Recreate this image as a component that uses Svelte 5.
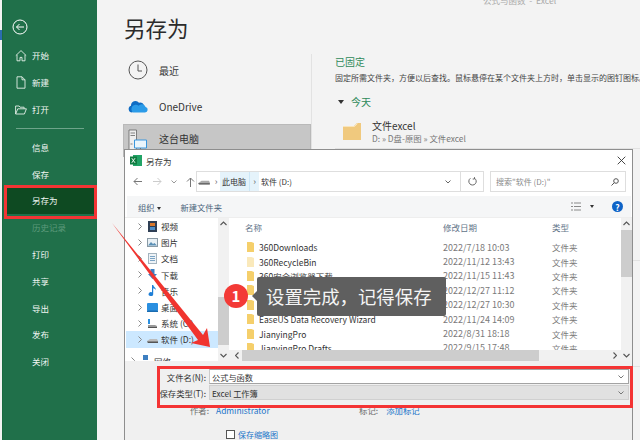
<script lang="ts">
	const navTop = [
		{ label: '开始', icon: 'home' },
		{ label: '新建', icon: 'doc' },
		{ label: '打开', icon: 'open' }
	];
	const navBottom = [
		{ label: '信息' },
		{ label: '保存' },
		{ label: '另存为', active: true },
		{ label: '历史记录', off: true },
		{ label: '打印' },
		{ label: '共享' },
		{ label: '导出' },
		{ label: '发布' },
		{ label: '关闭' }
	];
	const tree = [
		{ label: '视频', icon: 'video' },
		{ label: '图片', icon: 'pic' },
		{ label: '文档', icon: 'docs' },
		{ label: '下载', icon: 'down' },
		{ label: '音乐', icon: 'music' },
		{ label: '桌面', icon: 'desk' },
		{ label: '系统 (C:)', icon: 'sys' },
		{ label: '软件 (D:)', icon: 'drive', selected: true }
	];
	const files = [
		{ name: '360Downloads', date: '2022/7/18 10:03' },
		{ name: '360RecycleBin', date: '2022/11/12 13:43', faded: true },
		{ name: '360安全浏览器下载', date: '2022/11/15 11:43' },
		{ name: 'Apache', date: '2022/12/27 11:12' },
		{ name: 'D盘-原图', date: '2022/12/27 10:30' },
		{ name: 'EaseUS Data Recovery Wizard', date: '2022/11/24 14:09' },
		{ name: 'JianyingPro', date: '2022/8/31 18:18' },
		{ name: 'JianyingPro Drafts', date: '2022/9/15 17:48' }
	];
</script>

<div class="app">
	<div class="edge"><i></i></div>
	<aside class="side">
		<svg class="back" width="16" height="16" viewBox="0 0 16 16" fill="none" stroke="#fff" stroke-width="1">
			<circle cx="8" cy="8" r="7" />
			<path d="M12 8H4.500M7.500 5l-3 3 3 3" />
		</svg>
		<nav class="nav-top">
			{#each navTop as item}
				<div class="nav-item">
					<svg class="nav-icon" width="12" height="13" viewBox="0 0 12 13" fill="none" stroke="#e4efe8" stroke-width="0.9">
						{#if item.icon === 'home'}
							<path d="M.8 6.600 6 1.600l5.200 5M2 5.800v6h3V8.400h2v3.400h3v-6" />
						{:else if item.icon === 'doc'}
							<path d="M2 .8h5l3 3v8.400H2zM7 .8v3h3" />
						{:else}
							<path d="M.6 11V3h3.500l1 1.200h4v1.600M.6 11l2.200-5.200h8.600L9.400 11z" />
						{/if}
					</svg>
					<span>{item.label}</span>
				</div>
			{/each}
		</nav>
		<div class="nav-rule"></div>
		<nav class="nav-bottom">
			{#each navBottom as item}
				<div class="nav-item" class:active={item.active} class:off={item.off}>
					<span>{item.label}</span>
				</div>
			{/each}
		</nav>
	</aside>

	<main class="main">
		<p class="doc-title">公式与函数 &nbsp;-&nbsp; Excel</p>
		<h1>另存为</h1>
		<div class="columns">
			<div class="places">
				<div class="place">
					<svg width="20" height="20" viewBox="0 0 20 20" fill="none" stroke="#555" stroke-width="1">
						<circle cx="10" cy="10" r="9" />
						<path d="M10 4.500v6.500h4" />
					</svg>
					<span>最近</span>
				</div>
				<div class="place">
					<svg width="20" height="14" viewBox="0 0 20 14">
						<path d="M4 13.500a3.500 3.500 0 0 1-1-6.800 4.500 4.500 0 0 1 8-3 3.800 3.800 0 0 1 5 3.200z" fill="#0f6cc4" />
						<path d="M5 13.500h12a2.800 2.800 0 0 0 .6-5.500 4 4 0 0 0-7-1.300A3.400 3.400 0 0 0 5 13.500z" fill="#2b9be8" />
					</svg>
					<span>OneDrive</span>
				</div>
				<div class="place current">
					<svg width="20" height="22" viewBox="0 0 20 22" fill="none">
						<path d="M1 1h7.500v20H1z" fill="#eee" stroke="#666" stroke-width="0.8" />
						<path d="M2.500 4h4.500M2.500 6.500h4.500M2.500 15h2" stroke="#666" stroke-width="0.8" />
						<path d="M6.500 11h12v8h-12z" fill="#eaf5fc" stroke="#3a96dd" stroke-width="1" />
						<path d="M12.500 19v2M10 21.500h5" stroke="#666" stroke-width="0.8" />
					</svg>
					<span>这台电脑</span>
				</div>
			</div>
			<div class="pinned">
				<h2>已固定</h2>
				<p class="hint">固定所需文件夹，方便以后查找。鼠标悬停在某个文件夹上方时，单击显示的图钉图标。</p>
				<div class="group"><i class="caret"></i><span>今天</span></div>
				<div class="recent">
					<svg width="18" height="17" viewBox="0 0 18 17">
						<path d="M0 3h11l3-3h4v17H0z" fill="#f0c97e" />
						<path d="M0 3.500h11.500l3-3" fill="none" stroke="#fbeccb" stroke-width="0.8" />
					</svg>
					<div>
						<div class="recent-name">文件excel</div>
						<div class="recent-path">D: » D盘-原图 » 文件excel</div>
					</div>
				</div>
				<div class="rows-rule"></div>
				<div class="spare-row tall"></div>
				<div class="spare-row"></div>
			</div>
		</div>
	</main>

	<section class="dialog">
		<header class="dlg-title">
			<svg width="12" height="11" viewBox="0 0 12 11">
				<rect x="3" y="0" width="9" height="11" fill="#21a366" />
				<rect x="0" y="1.500" width="7" height="8" fill="#107c41" />
				<path d="m1.800 3.200 3.200 4.600M5 3.200 1.800 7.800" stroke="#fff" stroke-width="0.9" />
			</svg>
			<span>另存为</span>
			<svg class="close" width="9" height="9" viewBox="0 0 9 9" stroke="#333" stroke-width="0.9">
				<path d="m.7.700 7.600 7.600M8.300.700.700 8.300" />
			</svg>
		</header>

		<div class="addr-row">
			<div class="arrows">
				<svg width="10" height="9" viewBox="0 0 10 9" fill="none" stroke="#777"><path d="M9 4.500H1M4.500 1 1 4.500 4.500 8" /></svg>
				<svg width="10" height="9" viewBox="0 0 10 9" fill="none" stroke="#ccc"><path d="M1 4.500h8M5.500 1 9 4.500 5.500 8" /></svg>
				<svg width="6" height="4" viewBox="0 0 6 4" fill="none" stroke="#999"><path d="m.5.500 2.500 2.500L5.500.500" /></svg>
				<svg width="9" height="10" viewBox="0 0 9 10" fill="none" stroke="#777"><path d="M4.500 10V1M1 4.500 4.500 1 8 4.500" /></svg>
			</div>
			<div class="addr">
				<svg class="crumb-drive" width="12" height="5" viewBox="0 0 14 6"><path d="M0 4 4 1h9l1 2v2H1z" fill="#aaa" /><path d="M0 4h14v1.500H1z" fill="#555" /></svg>
				<span class="sep">›</span>
				<span class="crumb hot">此电脑</span>
				<span class="sep hot-sep">›</span>
				<span class="crumb">软件 (D:)</span>
				<svg class="addr-down" width="6" height="4" viewBox="0 0 6 4" fill="none" stroke="#666"><path d="m.5.500 2.500 2.500L5.500.500" /></svg>
				<div class="refresh">
					<svg width="9" height="9" viewBox="0 0 9 9" fill="none" stroke="#666" stroke-width="1"><path d="M6.500 1.200A3.700 3.700 0 1 1 2.400 1.300M6.500 .2v1.800H4.700" /></svg>
				</div>
			</div>
			<div class="search">
				<span>搜索"软件 (D:)"</span>
				<svg width="8" height="8" viewBox="0 0 8 8" fill="none" stroke="#555"><circle cx="5" cy="3" r="2.300" /><path d="M3.300 4.700.5 7.500" /></svg>
			</div>
		</div>

		<div class="toolbar">
			<span class="organize">组织 <i class="mini-caret"></i></span>
			<span class="newdir">新建文件夹</span>
			<span class="spacer"></span>
			<svg width="10" height="9" viewBox="0 0 10 9" stroke="#8a8a8a" stroke-width="1">
				<path d="M0 1h2M3 1h7M0 4.500h2M3 4.500h7M0 8h2M3 8h7" />
			</svg>
			<i class="mini-caret view"></i>
			<span class="help">?</span>
		</div>

		<div class="browser">
			<div class="tree">
				{#each tree as row}
					<div class="tree-row" class:selected={row.selected}>
						<svg class="chev" width="4" height="7" viewBox="0 0 4 7" fill="none" stroke="#888"><path d="m.5.500 3 3-3 3" /></svg>
						<svg class="tree-icon" width="11" height="11" viewBox="0 0 11 11">
							{#if row.icon === 'video'}
								<rect x="1" y="0" width="9" height="11" fill="#2f3f55" />
								<rect x="3" y="2" width="5" height="3" fill="#d9782d" />
								<rect x="3" y="6" width="5" height="3" fill="#4f8fc9" />
							{:else if row.icon === 'pic'}
								<rect x=".5" y="1.500" width="10" height="8" fill="#e8f0f5" stroke="#8a9aa5" />
								<path d="M1 8.500 4 5l2 2 1.500-1L10 8.500z" fill="#5a8fb5" />
							{:else if row.icon === 'docs'}
								<rect x="1.500" y=".5" width="8" height="10" fill="#eef3f7" stroke="#a4b4bf" />
								<path d="M3 3.500h5M3 5.500h5M3 7.500h5" stroke="#7aa3c4" />
							{:else if row.icon === 'down'}
								<path d="M3.500 0h4v5H10L5.500 10 1 5h2.500z" fill="#3d7fc1" />
							{:else if row.icon === 'music'}
								<path d="M5 0h1.200c.3 2 3 2.500 2.600 5C8.300 3.800 7 3.400 6.200 3.200V9A2.300 2 0 1 1 5 7.300z" fill="#1f7fd6" />
							{:else if row.icon === 'desk'}
								<rect x="0" y="1" width="11" height="8" rx="1" fill="#2a8fe0" />
								<rect x="0" y="8.500" width="11" height="1.500" fill="#1a6cb0" />
							{:else if row.icon === 'sys'}
								<path d="M1 1h2v5H1z" fill="#2a8fe0" />
								<path d="M1 7h7l2 1v2H1z" fill="#999" />
								<path d="M1 9h9v1H1z" fill="#555" />
							{:else}
								<path d="M0 7l3-2h7l1 2v2H1z" fill="#bbb" />
								<path d="M0 7.500h11V9H1z" fill="#555" />
							{/if}
						</svg>
						<span>{row.label}</span>
					</div>
				{/each}
				<div class="tree-row network">
					<svg class="chev" width="4" height="7" viewBox="0 0 4 7" fill="none" stroke="#888"><path d="m.5.500 3 3-3 3" /></svg>
					<svg class="tree-icon" width="11" height="11" viewBox="0 0 11 11"><rect x="3" y="0" width="5" height="5" fill="#3d7fc1" /><rect x="0" y="6" width="5" height="5" fill="#3d7fc1" /><rect x="6" y="6" width="5" height="5" fill="#3d7fc1" /></svg>
					<span>网络</span>
				</div>
			</div>

			<div class="vbar tree-bar">
				<svg class="bar-up" width="7" height="5" viewBox="0 0 7 5" fill="none" stroke="#555" stroke-width="1.100"><path d="m.5 4 3-3 3 3" /></svg>
				<div class="bar-track"><div class="bar-thumb tree-thumb"></div></div>
				<svg class="bar-down" width="7" height="5" viewBox="0 0 7 5" fill="none" stroke="#555" stroke-width="1.100"><path d="m.5 1 3 3 3-3" /></svg>
			</div>

			<div class="list">
				<div class="list-body">
					<div class="list-head">
						<span class="col-name">名称</span>
						<span class="col-date">修改日期</span>
						<span class="col-type">类型</span>
					</div>
					<div class="list-rows">
						{#each files as f}
							<div class="file">
								<svg class="folder" class:faded={f.faded} width="7" height="10" viewBox="0 0 7 10">
									<path d="M0 0h4.500L7 1v9H0z" fill="#f5cf6b" />
								</svg>
								<span class="col-name fname">{f.name}</span>
								<span class="col-date fmeta">{f.date}</span>
								<span class="col-type fmeta">文件夹</span>
							</div>
						{/each}
					</div>
				</div>
				<div class="hbar">
					<svg width="4" height="7" viewBox="0 0 4 7" fill="none" stroke="#555" stroke-width="1.100"><path d="M3.500.500.500 3.500l3 3" /></svg>
					<div class="hbar-track"><div class="hbar-thumb"></div></div>
					<svg width="4" height="7" viewBox="0 0 4 7" fill="none" stroke="#555" stroke-width="1.100"><path d="m.5.500 3 3-3 3" /></svg>
				</div>
			</div>

			<div class="vbar list-bar">
				<svg class="bar-up" width="7" height="5" viewBox="0 0 7 5" fill="none" stroke="#555" stroke-width="1.100"><path d="m.5 4 3-3 3 3" /></svg>
				<div class="bar-track"><div class="bar-thumb list-thumb"></div></div>
				<svg class="bar-down" width="7" height="5" viewBox="0 0 7 5" fill="none" stroke="#555" stroke-width="1.100"><path d="m.5 1 3 3 3-3" /></svg>
			</div>
		</div>

		<div class="form">
			<div class="form-row">
				<label for="fname">文件名(N):</label>
				<div class="field" id="fname">
					<span>公式与函数</span>
					<svg width="6" height="4" viewBox="0 0 6 4" fill="none" stroke="#777"><path d="m.5.500 2.500 2.500L5.500.500" /></svg>
				</div>
			</div>
			<div class="form-row">
				<label for="ftype">保存类型(T):</label>
				<div class="field select" id="ftype">
					<span>Excel 工作簿</span>
					<svg width="6" height="4" viewBox="0 0 6 4" fill="none" stroke="#777"><path d="m.5.500 2.500 2.500L5.500.500" /></svg>
				</div>
			</div>
			<div class="meta">
				<span class="meta-key">作者:</span>
				<span class="meta-link author">Administrator</span>
				<span class="meta-key tag-key">标记:</span>
				<span class="meta-link">添加标记</span>
			</div>
			<div class="thumb-opt">
				<i class="check"></i>
				<span class="meta-link">保存缩略图</span>
			</div>
		</div>
	</section>

	<!-- annotations laid over the screenshot -->
	<div class="red-box nav-mark"></div>
	<div class="red-box form-mark"></div>
	<svg class="pointer" width="102" height="128" viewBox="0 0 102 128">
		<path d="M1 1 87 118 80 121 99 125 96 106 92 113Z" fill="#f0342f" />
	</svg>
	<div class="callout">
		<span class="badge">1</span>
		<div class="bubble">设置完成，记得保存</div>
	</div>
</div>

<style>
	:global(body) {
		margin: 0;
	}

	.app {
		position: relative;
		display: flex;
		width: 640px;
		height: 440px;
		overflow: hidden;
		background: #f3f3f3;
		color: #333;
		font-family: "Noto Sans CJK SC", "Noto Sans", sans-serif;
	}

	.edge {
		flex: none;
		width: 2px;
		padding-top: 30px;
	}

	.edge i {
		display: block;
		height: 10px;
		background: #2b6cb0;
	}

	/* left green rail */
	.side {
		flex: none;
		width: 94px;
		background: #20704a;
		color: #f1f6f3;
		font-size: 8.500px;
		border-left: 1px solid #1a6a40;
	}

	.back {
		display: block;
		margin: 19px 0 0 9px;
	}

	.nav-top {
		margin-top: 7px;
	}

	.nav-item {
		display: flex;
		align-items: center;
		height: 26.800px;
		padding-left: 29px;
		position: relative;
	}

	.nav-icon {
		position: absolute;
		left: 12px;
		top: 7px;
	}

	.nav-item.active {
		background: #0e4a22;
		margin: 0 0 0 3px;
		padding-left: 26px;
	}

	.nav-item.off {
		color: #5d9a7b;
	}

	.nav-rule {
		height: 1px;
		margin: 6px 13px 4px 13px;
		background: #6ea48a;
	}

	/* backstage content */
	.main {
		flex: 1;
		min-width: 0;
		padding-left: 27px;
		position: relative;
	}

	.doc-title {
		position: absolute;
		left: 386px;
		top: -6px;
		margin: 0;
		font-size: 8.500px;
		color: #aaa;
		white-space: nowrap;
	}

	h1 {
		margin: 9px 0 0;
		font-size: 21.500px;
		font-weight: 400;
		line-height: 38px;
		color: #2b2b2b;
	}

	.columns {
		display: flex;
		margin-top: 7px;
	}

	.places {
		flex: none;
		width: 187px;
		height: 120px;
		border-right: 1px solid #e2e2e2;
		font-size: 10px;
	}

	.place {
		display: flex;
		align-items: center;
		gap: 11px;
		height: 36px;
		padding-left: 4px;
	}

	.place:first-child {
		margin-top: -2px;
	}

	.place.current {
		height: 33px;
		width: 188px;
		margin-left: -1px;
		box-sizing: border-box;
		background: #c6c6c6;
		border: 1px solid #b9b9b9;
		align-items: flex-start;
		padding-top: 4px;
	}

	.place.current span {
		margin-top: 2px;
	}

	.pinned {
		flex: 1;
		min-width: 0;
		padding-left: 23px;
		overflow: hidden;
	}

	h2 {
		margin: 0;
		font-size: 10px;
		font-weight: 400;
		line-height: 16px;
		color: #2f8a5a;
	}

	.hint {
		margin: 1px 0 0;
		font-size: 8px;
		line-height: 14px;
		white-space: nowrap;
		color: #444;
	}

	.group {
		display: flex;
		align-items: center;
		gap: 7px;
		margin-top: 8px;
		padding-left: 3px;
		font-size: 10px;
		line-height: 18px;
		color: #2f8a5a;
	}

	.caret {
		width: 0;
		height: 0;
		border: 3px solid transparent;
		border-top: 4px solid #333;
		border-bottom: 0;
	}

	.recent {
		display: flex;
		align-items: center;
		gap: 11px;
		margin-top: 8px;
		padding-left: 8px;
	}

	.recent-name {
		font-size: 10px;
		line-height: 13px;
		color: #333;
	}

	.recent-path {
		font-size: 8.400px;
		line-height: 12px;
		color: #777;
	}

	.rows-rule {
		height: 1px;
		margin-top: 4px;
		background: #e2e2e2;
	}

	.spare-row {
		height: 105px;
		border-bottom: 1px solid #e2e2e2;
	}

	.spare-row.tall {
		height: 111px;
	}

	/* save-as dialog floats above the backstage page */
	.dialog {
		position: absolute;
		left: 124px;
		top: 149px;
		width: 509px;
		height: 300px;
		box-sizing: border-box;
		display: flex;
		flex-direction: column;
		background: #fff;
		border: 1px solid #8e8e8e;
		font-size: 8.500px;
	}

	.dlg-title {
		display: flex;
		align-items: center;
		gap: 4px;
		height: 21px;
		flex: none;
		padding: 0 6px 0 5px;
		font-size: 8.500px;
	}

	.close {
		margin-left: auto;
	}

	.addr-row {
		display: flex;
		align-items: center;
		height: 21px;
		flex: none;
		padding: 0 6px 0 8px;
	}

	.arrows {
		display: flex;
		align-items: center;
		gap: 9px;
		width: 63px;
		flex: none;
	}

	.addr {
		display: flex;
		align-items: center;
		height: 21px;
		flex: 1;
		box-sizing: border-box;
		border: 1px solid #dedede;
		font-size: 8px;
		color: #333;
	}

	.crumb-drive {
		margin: 2px 2px 0 1px;
	}

	.sep {
		font-size: 9px;
		width: 8px;
		text-align: center;
		color: #666;
	}

	.crumb {
		padding: 0 3px 0 2px;
		line-height: 19px;
	}

	.crumb.hot,
	.hot-sep {
		background: #e5f3fb;
		line-height: 19px;
	}

	.hot-sep {
		width: 10px;
		box-sizing: border-box;
		border-left: 1px solid #cbe6f7;
		margin-right: 0;
	}

	.addr-down {
		margin-left: auto;
		margin-right: 9px;
	}

	.refresh {
		display: flex;
		align-items: center;
		justify-content: center;
		width: 22px;
		height: 19px;
		border-left: 1px solid #dedede;
	}

	.search {
		display: flex;
		align-items: center;
		justify-content: space-between;
		flex: none;
		width: 136px;
		height: 21px;
		box-sizing: border-box;
		margin-left: 6px;
		padding: 0 6px 0 5px;
		border: 1px solid #dedede;
		font-size: 8px;
		color: #8a8a8a;
	}

	.toolbar {
		display: flex;
		align-items: center;
		flex: none;
		height: 21px;
		margin: 4px 1px 0 2px;
		padding: 0 8px 0 11px;
		background: #f5f6f7;
		color: #49627a;
		font-size: 8.300px;
	}

	.newdir {
		margin-left: 19px;
	}

	.spacer {
		flex: 1;
	}

	.mini-caret {
		display: inline-block;
		width: 0;
		height: 0;
		margin-left: 1px;
		vertical-align: middle;
		border: 2px solid transparent;
		border-top: 3px solid #333;
		border-bottom: 0;
	}

	.mini-caret.view {
		margin: 0 18px 0 9px;
	}

	.help {
		display: flex;
		align-items: center;
		justify-content: center;
		width: 11px;
		height: 11px;
		border-radius: 50%;
		background: #0e63c7;
		color: #fff;
		font-size: 8.500px;
		font-weight: 700;
	}

	.browser {
		display: flex;
		flex: none;
		height: 144px;
		overflow: hidden;
		border-top: 1px solid #eee;
		box-sizing: border-box;
	}

	.tree {
		flex: none;
		width: 92px;
		margin-left: 1px;
		box-sizing: border-box;
		overflow: hidden;
	}

	.tree-row {
		display: flex;
		align-items: center;
		height: 16.200px;
		padding-left: 12px;
		white-space: nowrap;
		color: #333;
	}

	.tree-row.selected {
		background: #cce8ff;
	}

	.tree-row.network {
		margin-top: 5px;
		padding-left: 5px;
	}

	.tree-icon {
		margin-left: 5px;
		margin-right: 3px;
		flex: none;
	}

	.vbar {
		flex: none;
		display: flex;
		flex-direction: column;
		align-items: center;
		width: 11px;
		background: #f1f1f1;
	}

	.bar-up,
	.bar-down {
		margin: 3px 0;
	}

	.bar-track {
		flex: 1;
		width: 100%;
		position: relative;
	}

	.bar-thumb {
		position: absolute;
		left: 0;
		right: 0;
		background: #cdcdcd;
	}

	.tree-thumb {
		top: 68px;
		height: 48px;
	}

	.list-thumb {
		top: 1px;
		height: 47px;
	}

	.list {
		flex: 1;
		min-width: 0;
		display: flex;
		flex-direction: column;
	}

	.list-body {
		flex: 1;
		min-height: 0;
		overflow: hidden;
		padding-left: 16px;
	}

	.list-head {
		display: flex;
		align-items: center;
		height: 18px;
		color: #5f7488;
	}

	.list-rows {
		padding-top: 4px;
	}

	.file {
		display: flex;
		align-items: center;
		height: 14.400px;
		white-space: nowrap;
	}

	.col-name {
		width: 184px;
		flex: none;
	}

	.list-head .col-name {
		width: 198px;
	}

	.col-date {
		width: 109px;
		flex: none;
	}

	.folder {
		flex: none;
		margin: 0 5px 0 2px;
	}

	.folder.faded {
		opacity: 0.45;
	}

	.fname {
		color: #333;
	}

	.fmeta {
		color: #7a7a7a;
		font-size: 9px;
	}

	.col-type.fmeta {
		font-size: 8.500px;
	}

	.hbar {
		display: flex;
		align-items: center;
		flex: none;
		height: 11px;
		gap: 3px;
		padding: 0 4px 0 6px;
		background: #f1f1f1;
	}

	.hbar-track {
		flex: 1;
		height: 100%;
		margin-right: 71px;
	}

	.hbar-thumb {
		height: 100%;
		width: 100%;
		background: #cdcdcd;
	}

	.form {
		flex: 1;
		padding: 8px 3px 0 0;
		background: #f0f0f0;
		font-size: 8.400px;
	}

	.form-row {
		display: flex;
		align-items: center;
		gap: 3px;
		margin-bottom: 1px;
	}

	label {
		flex: none;
		width: 81px;
		text-align: right;
		color: #333;
	}

	.field {
		flex: 1;
		display: flex;
		align-items: center;
		justify-content: space-between;
		height: 15px;
		box-sizing: border-box;
		padding: 0 4px 0 2px;
		background: #fff;
		border: 1px solid #a3a3a3;
		border-left-color: #ccc;
		font-size: 8.200px;
	}

	.field.select {
		background: #e1e1e1;
		border-color: #d0d0d0;
	}

	.meta {
		display: flex;
		margin-top: 4px;
		padding-left: 65px;
	}

	.meta-key {
		color: #6d6d6d;
	}

	.meta-link {
		color: #1b74c9;
	}

	.author {
		margin-left: 7px;
		width: 143px;
	}

	.tag-key {
		margin-right: 8px;
	}

	.thumb-opt {
		display: flex;
		align-items: center;
		gap: 3px;
		margin-top: 13px;
		padding-left: 101px;
		font-size: 8px;
	}

	.check {
		width: 7px;
		height: 7px;
		background: #fff;
		border: 1px solid #555;
	}

	/* tutorial marks */
	.red-box {
		position: absolute;
		box-sizing: border-box;
		border: 3px solid #f43434;
	}

	.nav-mark {
		left: 4px;
		top: 185px;
		width: 93px;
		height: 34px;
	}

	.form-mark {
		left: 157px;
		top: 366px;
		width: 476px;
		height: 42px;
	}

	.pointer {
		position: absolute;
		left: 111px;
		top: 222px;
	}

	.callout {
		position: absolute;
		left: 224px;
		top: 277px;
		display: flex;
		align-items: center;
	}

	.badge {
		display: flex;
		align-items: center;
		justify-content: center;
		width: 24px;
		height: 24px;
		margin-top: -2px;
		border-radius: 50%;
		background: #f33a36;
		color: #fff;
		font-size: 15px;
		font-weight: 700;
	}

	.bubble {
		position: relative;
		margin-left: 9px;
		padding: 0 14px 0 9px;
		height: 39px;
		line-height: 38px;
		border-radius: 2px;
		background: #5f5f5f;
		color: #f4f4f4;
		font-size: 18.400px;
		white-space: nowrap;
	}

	.bubble::before {
		content: "";
		position: absolute;
		left: -5px;
		top: 14px;
		border: 5px solid transparent;
		border-right-color: #5f5f5f;
		border-left: 0;
	}
</style>
